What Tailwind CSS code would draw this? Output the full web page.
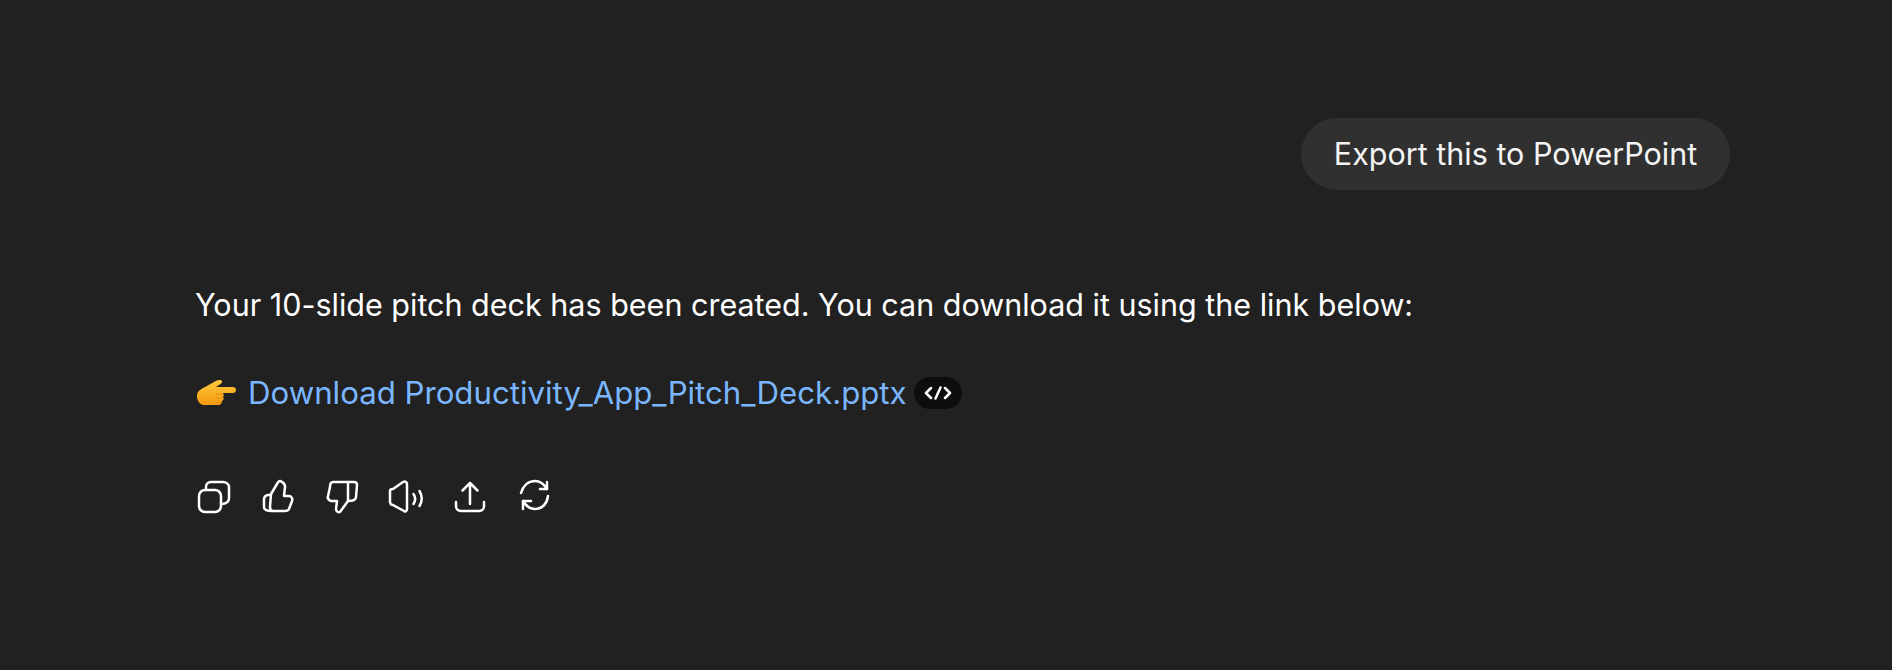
<!DOCTYPE html>
<html lang="en">
<head>
  <meta charset="UTF-8">
  <title>Chat</title>
  <script src="https://cdn.jsdelivr.net/npm/@tailwindcss/browser@4"></script>
</head>
<body class="bg-[#212121] text-white h-screen overflow-hidden font-['Inter',sans-serif]">
  <main class="w-[1534px] ml-[196px] pt-[118px]">
    <!-- user message -->
    <div class="flex justify-end">
      <div class="h-[72px] w-[429px] rounded-[36px] bg-[#303030] flex items-center justify-center text-[30.500px] text-[#f4f4f4] whitespace-nowrap">Export this to PowerPoint</div>
    </div>

    <!-- assistant reply -->
    <p class="mt-[93px] -ml-px text-[30.500px] leading-[44px] whitespace-nowrap">Your 10-slide pitch deck has been created. You can download it using the link below:</p>

    <div class="mt-[44px] h-[44px] flex items-center whitespace-nowrap">
      <svg class="w-[42px] h-[28px]" viewBox="0 0 42 28">
        <defs>
          <linearGradient id="hand" x1="0" y1="0" x2="0" y2="1">
            <stop offset="0" stop-color="#ffc93a"/>
            <stop offset="1" stop-color="#f49a12"/>
          </linearGradient>
        </defs>
        <path d="M1 17c0-5 4-7 8-9l9-5c3-2 7-3 8-1 1 2-3 4-6 6h17c4 0 4 6 0 6H27c1 2 1 3 0 4 1 1 1 3-1 4 0 2-1 4-4 4H11C5 27 1 23 1 17z" fill="url(#hand)"/>
        <path d="M20 15h7M20 19h7M19 23h6" stroke="#d98500" stroke-width="0.800" fill="none"/>
      </svg>
      <a class="ml-[10px] text-[31.200px] text-[#7ab7ff]">Download Productivity_App_Pitch_Deck.pptx</a>
      <span class="ml-[7px] w-[48px] h-[32px] rounded-full bg-[#0d0d0d] flex items-center justify-center">
        <svg class="w-[28px] h-[14px]" viewBox="0 0 28 14" fill="none" stroke="#fff" stroke-width="2.500" stroke-linecap="round" stroke-linejoin="round">
          <path d="M7 2 2 7l5 5M21 2l5 5-5 5M16.500 1.500l-5 11"/>
        </svg>
      </span>
    </div>

    <!-- message actions -->
    <div class="mt-[64px] flex items-center gap-[28px] text-white">
      <svg class="w-[36px] h-[36px]" viewBox="0 0 36 36" fill="none" stroke="currentColor" stroke-width="2.500" stroke-linecap="round" stroke-linejoin="round">
        <rect x="3" y="11" width="22" height="22" rx="6"/>
        <path d="M10 11V8c0-3 2-5 5-5h12c3 0 6 2 6 5v11c0 4-3 6-8 6"/>
      </svg>
      <svg class="w-[36px] h-[36px]" viewBox="0 0 36 36" fill="none" stroke="currentColor" stroke-width="2.500" stroke-linecap="round" stroke-linejoin="round">
        <path d="M11 15 17 5c1-2 2-3 3-3 3 1 5 3 5 6l-1 9h5c2 0 4 2 3 5l-3 8c-1 2-2 2-4 2H13c-2 0-3-2-3-4z"/>
        <path d="M11 16H8c-2 0-4 2-4 4v8c0 3 3 4 8 4"/>
      </svg>
      <svg class="w-[36px] h-[36px]" viewBox="0 0 36 36" fill="none" stroke="currentColor" stroke-width="2.500" stroke-linecap="round" stroke-linejoin="round">
        <path d="M9 3h15v19l-8 11c-2 1-4-1-4-3l1-8H7c-2-1-4-3-3-5L6 8c0-3 1-5 3-5z"/>
        <path d="M24 3h6c2 0 3 1 3 3l-1 12c0 3-3 4-8 4"/>
      </svg>
      <svg class="w-[36px] h-[36px]" viewBox="0 0 36 36" fill="none" stroke="currentColor" stroke-width="2.500" stroke-linecap="round" stroke-linejoin="round">
        <path d="M2 12c0-1 1-2 3-2L15 3c2-1 4 0 4 2v25c0 2-2 3-3 2L5 26c-2 0-3-2-3-3z"/>
        <path d="M25.500 15c2 3 2 7 0 10M31.500 12c3 5 3 10 0 15"/>
      </svg>
      <svg class="w-[36px] h-[36px]" viewBox="0 0 36 36" fill="none" stroke="currentColor" stroke-width="2.500" stroke-linecap="round" stroke-linejoin="round">
        <path d="M18 25V4M10.500 11.500 18 4l7.500 7.500"/>
        <path d="M4 23v4c0 3 2 5 5 5h18c3 0 5-2 5-5v-4"/>
      </svg>
      <svg class="w-[36px] h-[36px]" viewBox="0 0 36 36" fill="none" stroke="currentColor" stroke-width="2.500" stroke-linecap="round" stroke-linejoin="round">
        <path d="M5 14C7 7 12 2 19 2c5 0 9 3 12 8"/>
        <path d="M31 3v7h-7"/>
        <path d="M32 17c-1 8-6 13-13 13-5 0-9-3-12-8"/>
        <path d="M7 30v-8h8"/>
      </svg>
    </div>
  </main>
</body>
</html>
